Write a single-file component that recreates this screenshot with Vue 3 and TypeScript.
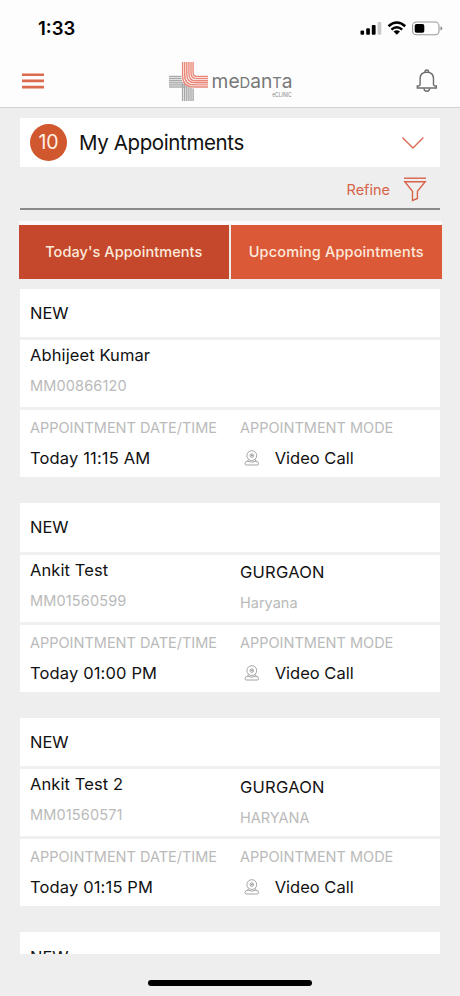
<script setup lang="ts">
interface Appointment {
  status: string
  name?: string
  code?: string
  city?: string
  state?: string
  time?: string
  mode?: string
}

const appointments: Appointment[] = [
  { status: 'NEW', name: 'Abhijeet Kumar', code: 'MM00866120', time: 'Today 11:15 AM', mode: 'Video Call' },
  { status: 'NEW', name: 'Ankit Test', code: 'MM01560599', city: 'GURGAON', state: 'Haryana', time: 'Today 01:00 PM', mode: 'Video Call' },
  { status: 'NEW', name: 'Ankit Test 2', code: 'MM01560571', city: 'GURGAON', state: 'HARYANA', time: 'Today 01:15 PM', mode: 'Video Call' },
  { status: 'NEW' },
]

const stripes = [0, 1, 2, 3, 4, 5]
const pitch = 2.1

// Each grey stripe runs in from the left, each red one bends from the top arm to the right arm.
function redStripe(i: number): string {
  const x = 13.6 + i * pitch
  const y = 26 - i * pitch
  const r = 11.5 - i * 1.5
  return `M${x} 1V${y - r}Q${x} ${y} ${x + r} ${y}H39`
}
</script>

<template>
  <div class="screen">
    <div class="status">
      <span class="clock">1:33</span>
      <svg class="indicators" width="84" height="16" viewBox="0 0 84 16">
        <rect x="0.5" y="9.5" width="3.6" height="4.3" rx="1" />
        <rect x="6.2" y="7.2" width="3.7" height="6.6" rx="1" />
        <rect x="11.8" y="4" width="3.8" height="9.8" rx="1" />
        <rect x="17.6" y="1" width="3.7" height="12.8" rx="1" fill="#c8c8c8" />
        <g fill="none" stroke="#000" stroke-width="2.5">
          <path d="M28.5 5.2Q36.8 -2.2 45.2 5.2" />
          <path d="M31.4 8.6Q36.8 3.9 42.2 8.6" />
        </g>
        <path d="M33.6 10.5Q36.8 8 40 10.5L36.8 13.8Z" />
        <rect x="52.6" y="1" width="26.4" height="12.8" rx="3.8" fill="#fff" stroke="#999" stroke-width="1.1" />
        <rect x="54.7" y="3.1" width="9.6" height="8.7" rx="1.8" />
        <path d="M80.5 5.3Q82.3 6 82.3 7.4T80.5 9.6Z" fill="#888" />
      </svg>
    </div>

    <header class="header">
      <svg class="menu" width="22" height="16" viewBox="0 0 22 16">
        <path d="M0 1.7H22M0 7.9H22M0 14.1H22" stroke="#db6b4e" stroke-width="2.6" />
      </svg>
      <svg class="logo" width="126" height="41" viewBox="0 0 126 41">
        <g fill="none" stroke-width="1.4">
          <g stroke="#a6a6a6">
            <path v-for="i in stripes" :key="'h' + i" :d="`M0 ${15.5 + i * pitch}H${12.4 + i * i * 0.17}`" />
            <path v-for="i in stripes" :key="'v' + i" :d="`M${13.6 + i * pitch} 40V${21.8 + i * 1.15}`" />
          </g>
          <g stroke="#ea8778">
            <path v-for="i in stripes" :key="'r' + i" :d="redStripe(i)" />
          </g>
        </g>
        <text class="brand" x="42.6" y="27.4" textLength="81" lengthAdjust="spacingAndGlyphs">me<tspan class="cap">D</tspan>an<tspan class="cap">T</tspan>a</text>
        <text class="clinic" x="103.2" y="35.8" textLength="19.5" lengthAdjust="spacingAndGlyphs">eCLINIC</text>
      </svg>
      <svg class="bell" width="22" height="24" viewBox="0 0 22 24" fill="none" stroke="#6d6d6d" stroke-width="1.4">
        <path d="M9 3.4V2.5Q9 1 10.8 1T12.6 2.5V3.4" />
        <path d="M4.1 15.8V9.9Q4.1 3.3 10.8 3.3T17.5 9.9V15.8Q18.2 17 20.3 17V19H1.3V17Q3.4 17 4.1 15.8Z" />
        <path d="M7.9 19.4Q8.2 22.2 10.8 22.2T13.7 19.4" />
      </svg>
    </header>

    <main class="content">
      <section class="title">
        <span class="count">10</span>
        <h1>My Appointments</h1>
        <svg width="24" height="14" viewBox="0 0 24 14" fill="none" stroke="#d76952" stroke-width="1.3">
          <path d="M1.4 1.5L12 12L22.4 1.5" />
        </svg>
      </section>

      <div class="refine">
        <span>Refine</span>
        <svg width="24" height="25" viewBox="0 0 24 25" fill="none" stroke="#d8634a" stroke-width="1.4">
          <path d="M1 1.2H23" />
          <path d="M1.8 4.8H22.2L14.4 14.3V21.5L9.5 23.5V14.3Z" />
        </svg>
      </div>

      <nav class="tabs">
        <button class="tab active"><span>Today's Appointments</span></button>
        <button class="tab"><span>Upcoming Appointments</span></button>
      </nav>

      <div class="list">
        <article v-for="(a, i) in appointments" :key="i" class="card">
          <div class="row head"><span class="strong">{{ a.status }}</span></div>
          <div v-if="a.name" class="row person">
            <div class="col">
              <span class="strong name">{{ a.name }}</span>
              <span class="muted code">{{ a.code }}</span>
            </div>
            <div v-if="a.city" class="col place">
              <span class="strong city">{{ a.city }}</span>
              <span class="muted">{{ a.state }}</span>
            </div>
          </div>
          <div v-if="a.time" class="row details">
            <div class="col">
              <span class="muted">APPOINTMENT DATE/TIME</span>
              <span class="strong time">{{ a.time }}</span>
            </div>
            <div class="col">
              <span class="muted">APPOINTMENT MODE</span>
              <span class="strong mode">
                <svg width="16" height="16" viewBox="0 0 16 16" fill="none" stroke="#999" stroke-width="0.9">
                  <circle cx="7.8" cy="5.6" r="4.9" />
                  <circle cx="7.8" cy="5.6" r="1.8" />
                  <circle cx="7.9" cy="5.5" r="0.8" fill="#777" stroke="none" />
                  <path d="M4.3 9.5L3.7 11.2Q1 11.4 1 13.6Q1 15 2.3 15H13.3Q14.6 15 14.6 13.6Q14.6 11.4 11.9 11.2L11.3 9.5M3.7 11.2Q7.8 13.2 11.9 11.2" />
                </svg>
                {{ a.mode }}
              </span>
            </div>
          </div>
        </article>
      </div>
    </main>

    <div class="home"><span></span></div>
  </div>
</template>

<style>
body {
  background: #eee;
}
</style>

<style scoped>
.screen {
  display: flex;
  flex-direction: column;
  width: 460px;
  height: 996px;
  overflow: hidden;
  background: #eee;
  color: #111;
  font-family: Inter, "Liberation Sans", sans-serif;
}
.status {
  display: flex;
  justify-content: space-between;
  align-items: flex-start;
  box-sizing: border-box;
  height: 54px;
  padding: 17px 17px 0 38px;
  background: #fdfdfd;
}
.clock {
  font-size: 18.5px;
  line-height: 23px;
  font-weight: 600;
  color: #000;
}
.indicators {
  display: block;
  margin: 4px -1px 0 0;
}
.header {
  display: grid;
  grid-template-columns: 147px 1fr 22px;
  align-items: center;
  box-sizing: border-box;
  height: 54px;
  padding: 0 22px;
  background: #fdfdfd;
  border-bottom: 1px solid #d2d2d2;
}
.header svg {
  display: block;
}
.logo {
  margin-top: 1px;
}
.brand {
  font-size: 19.5px;
  font-weight: 400;
  fill: #777;
}
.cap {
  font-size: 15px;
}
.clinic {
  font-size: 6px;
  fill: #888;
}
.content {
  display: flex;
  flex-direction: column;
  box-sizing: border-box;
  height: 846px;
  padding: 10px 20px 0;
  overflow: hidden;
}
.title {
  display: flex;
  align-items: center;
  box-sizing: border-box;
  height: 49px;
  padding: 0 15.5px 0 10px;
  background: #fff;
  flex: none;
}
.count {
  width: 37px;
  height: 37px;
  border-radius: 50%;
  background: #d1572f;
  color: #fff0e4;
  font-size: 19.5px;
  line-height: 37px;
  text-align: center;
}
h1 {
  flex: 1;
  margin: 0 0 0 12px;
  font-size: 20.5px;
  line-height: 26px;
  font-weight: 400;
  letter-spacing: -0.38px;
  color: #111;
}
.refine {
  display: flex;
  justify-content: flex-end;
  align-items: center;
  gap: 13px;
  box-sizing: border-box;
  flex: none;
  height: 43px;
  padding: 3px 13px 0 0;
  border-bottom: 2px solid #8a8a8a;
  color: #d5644a;
  font-size: 14.5px;
}
.tabs {
  display: grid;
  grid-template-columns: 210.5px 210.5px;
  gap: 2px;
  flex: none;
  height: 54px;
  margin: 10.5px -2px 0 -1.5px;
  border-top: 4px solid #fafafa;
}
.tab {
  margin: 0;
  padding: 0 0 1px;
  border: 0;
  background: #dc5938;
  color: #fdeadc;
  font-family: inherit;
  font-size: 14.5px;
  font-weight: 500;
  letter-spacing: 0.15px;
  white-space: nowrap;
}
.tab.active {
  background: #c5482c;
  letter-spacing: 0.08px;
}
.list {
  display: flex;
  flex-direction: column;
  gap: 26px;
  margin-top: 10px;
}
.card {
  display: flex;
  flex-direction: column;
  gap: 3px;
  flex: none;
  background: #f0f0f0;
}
.row {
  display: grid;
  grid-template-columns: 210px 1fr;
  box-sizing: border-box;
  height: 67px;
  padding: 0 10px;
  background: #fff;
}
.head {
  height: 48.6px;
  align-items: center;
}
.col {
  display: flex;
  flex-direction: column;
  gap: 11px;
  padding-top: 5px;
}
.place {
  padding-top: 7.5px;
}
.details .col {
  gap: 10px;
  padding-top: 8px;
}
.strong {
  font-size: 16.5px;
  line-height: 20px;
  white-space: nowrap;
}
.name {
  letter-spacing: 0.1px;
}
.time {
  letter-spacing: 0.15px;
}
.city {
  letter-spacing: 0.25px;
}
.muted {
  font-size: 14.5px;
  line-height: 20px;
  color: #bababa;
  white-space: nowrap;
}
.code {
  letter-spacing: 0.15px;
}
.mode {
  display: flex;
  align-items: center;
  gap: 14.5px;
  padding-left: 4.2px;
}
.home {
  display: flex;
  justify-content: center;
  padding-top: 26px;
}
.home span {
  width: 164px;
  height: 6px;
  border-radius: 3px;
  background: #000;
}
</style>
